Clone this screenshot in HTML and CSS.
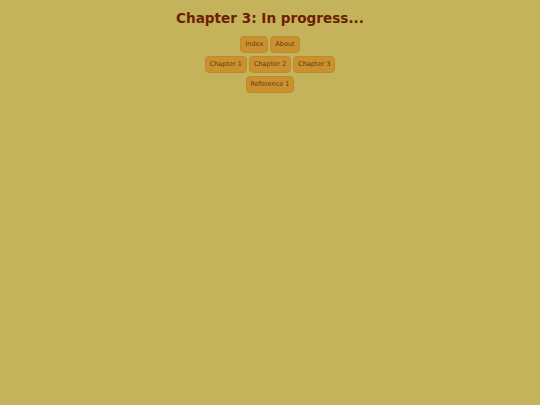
FILE: index.html
```html
<!DOCTYPE html>
<html lang="en">
<head>
<meta charset="utf-8">
<title>Chapter 3: In progress...</title>
<link rel="stylesheet" href="styles.css">
</head>
<body>
  <h1 class="title">Chapter 3: In progress...</h1>
  <nav class="nav">
    <div class="nav-row">
      <a class="nav-btn" href="#">Index</a>
      <a class="nav-btn" href="#">About</a>
    </div>
    <div class="nav-row">
      <a class="nav-btn" href="#">Chapter 1</a>
      <a class="nav-btn" href="#">Chapter 2</a>
      <a class="nav-btn" href="#">Chapter 3</a>
    </div>
    <div class="nav-row">
      <a class="nav-btn" href="#">Reference 1</a>
    </div>
  </nav>
</body>
</html>
```
FILE: styles.css
```css
html, body {
  margin: 0;
  height: 100%;
}

body {
  background: #c4b35a;
  font-family: "DejaVu Sans", Verdana, sans-serif;
  padding-top: 10px;
  box-sizing: border-box;
}

.title {
  margin: 0 0 10px;
  font-size: 13.6px;
  line-height: 16px;
  font-weight: bold;
  text-align: center;
  color: #6a1f05;
}

.nav {
  display: flex;
  flex-direction: column;
  align-items: center;
  gap: 3px;
}

.nav-row {
  display: flex;
  gap: 2px;
}

.nav-btn {
  display: block;
  padding: 0 4px;
  height: 15px;
  line-height: 15px;
  border: 1px solid #bc8a30;
  border-radius: 4px;
  background: #c9922f;
  color: #6e3312;
  font-size: 6.5px;
  text-decoration: none;
}
```
